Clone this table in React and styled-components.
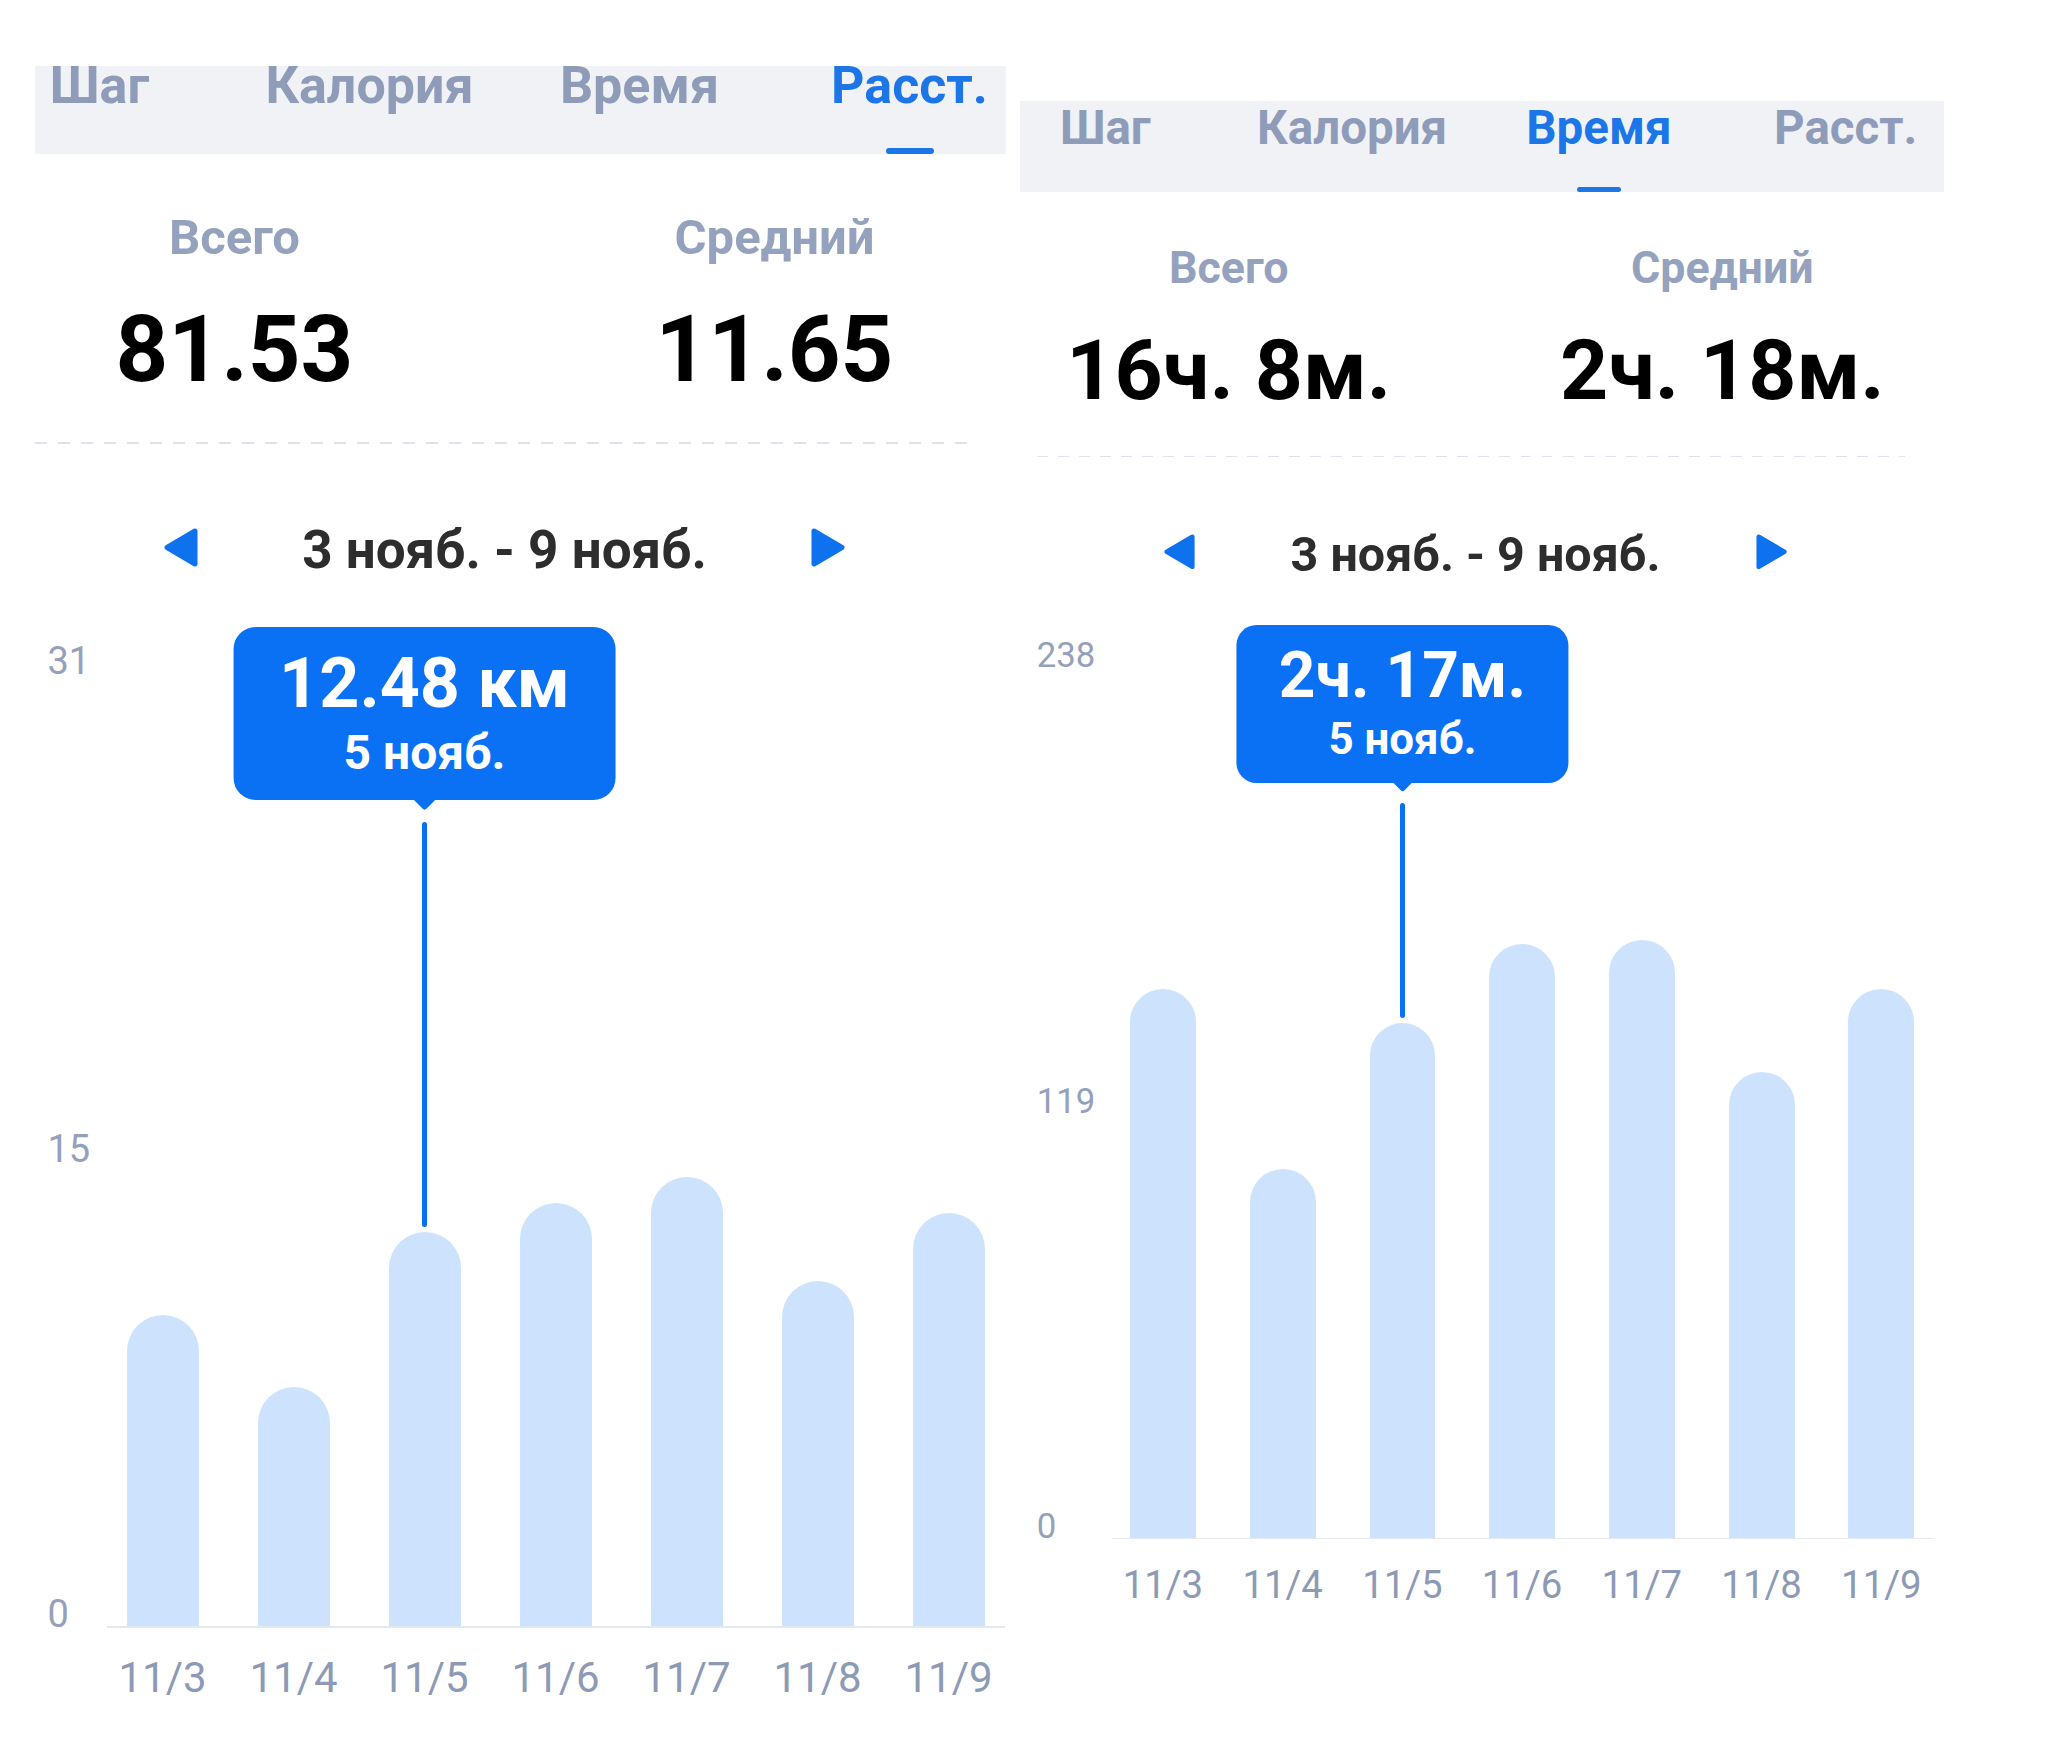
import React from 'react';
import styled, { createGlobalStyle } from 'styled-components';

const GlobalStyle = createGlobalStyle`
    html, body {
        margin: 0;
        padding: 0;
        background: #ffffff;
    }
    body {
        font-family: Roboto, "Noto Sans", "Liberation Sans", sans-serif;
    }
`;

const BLUE = '#0b71f4';
const TAB_BG = '#f0f2f6';
const PLOT_H = 979;

const Page = styled.div`
    display: flex;
    align-items: flex-start;
    width: 2048px;
    min-height: 1742px;
`;

// one phone screenshot, 1080 wide, scaled and placed where it sits in the collage
const Screen = styled.div`
    flex: none;
    width: 1080px;
    zoom: ${p => p.$scale};
    margin-left: ${p => p.$left}px;
    margin-top: ${p => p.$top}px;
`;

// $cut: the top of the bar was cropped away; $from/$to: visible part of its background
const TabBar = styled.div`
    display: grid;
    grid-template-columns: repeat(4, 1fr);
    height: ${p => 100 - p.$cut}px;
    background: linear-gradient(
        to right,
        transparent ${p => p.$from}px,
        ${TAB_BG} ${p => p.$from}px,
        ${TAB_BG} ${p => p.$to}px,
        transparent ${p => p.$to}px
    );
`;

const Tab = styled.div`
    display: flex;
    flex-direction: column;
    align-items: center;
    box-sizing: border-box;
    height: 100%;
    padding-top: ${p => (p.$cut ? 0 : 4)}px;
    font-size: 52px;
    font-weight: 700;
    line-height: ${p => (p.$cut ? 0.75 : 1)};
    color: ${p => (p.$active ? '#1c76e8' : '#8e9cba')};
`;

const Indicator = styled.span`
    margin-top: auto;
    width: 48px;
    height: 6px;
    border-radius: 3px;
    background: #1c76e8;
`;

const Stats = styled.div`
    display: grid;
    grid-template-columns: 1fr 1fr;
    padding-top: 59px;
    text-align: center;
`;

const StatLabel = styled.div`
    font-size: 49px;
    font-weight: 700;
    line-height: 1;
    color: #95a2bd;
`;

const StatValue = styled.div`
    margin-top: 42px;
    font-size: 92px;
    font-weight: 700;
    line-height: 1;
    color: #000000;
`;

const Divider = styled.div`
    margin: 46px 70px 0 ${p => p.$from}px;
    height: 2px;
    background: repeating-linear-gradient(to right, #dde3ee 0 12px, transparent 12px 23px);
`;

const DateRow = styled.div`
    display: flex;
    justify-content: center;
    align-items: center;
    gap: 104px;
    margin-top: 80px;
    font-size: 53px;
    font-weight: 700;
    line-height: 1;
    color: #2d2d2d;
`;

const ArrowIcon = styled.svg`
    display: block;
    margin-bottom: 7px;
`;

const Chart = styled.div`
    display: grid;
    grid-template-columns: 142px 898px;
    margin-top: 65px;
`;

const YAxis = styled.div`
    display: flex;
    flex-direction: column;
    justify-content: space-between;
    box-sizing: border-box;
    height: 991px;
    padding-left: ${p => p.$pad}px;
    font-size: 38px;
    font-weight: 400;
    line-height: 1;
    color: #95a1bb;

    & > span:nth-child(2) {
        margin-top: 23px;
    }
`;

const Plot = styled.div`
    position: relative;
    display: flex;
    justify-content: space-between;
    align-items: flex-end;
    height: ${PLOT_H}px;
    margin-top: 5px;
    padding: 0 20px;
    border-bottom: 2px solid #e3e8f1;
`;

const Bar = styled.div`
    width: 72px;
    background: #cde3fd;
    border-radius: 36px 36px 0 0;
`;

const XAxis = styled.div`
    grid-column: 2;
    display: flex;
    justify-content: space-between;
    padding: 0 6px;
    margin-top: 24px;
    font-size: 42px;
    font-weight: 400;
    line-height: 1;
    color: #8d9ab5;
`;

const XLabel = styled.span`
    width: 100px;
    text-align: center;
    white-space: nowrap;
`;

const Tooltip = styled.div`
    position: absolute;
    top: -20px;
    transform: translateX(-50%);
    box-sizing: border-box;
    height: 173px;
    padding: 21px 46px 0;
    border-radius: 22px;
    background: ${BLUE};
    color: #ffffff;
    text-align: center;
    white-space: nowrap;

    &::after {
        content: '';
        position: absolute;
        left: 50%;
        bottom: -7px;
        width: 18px;
        height: 18px;
        margin-left: -9px;
        border-radius: 3px;
        background: ${BLUE};
        transform: rotate(45deg);
    }
`;

const TipValue = styled.div`
    font-size: 70px;
    font-weight: 700;
    line-height: 1;
`;

const TipDate = styled.div`
    margin-top: 11px;
    font-size: 48px;
    font-weight: 700;
    line-height: 1;
`;

const Guide = styled.div`
    position: absolute;
    top: 175px;
    width: 5px;
    margin-left: -2.5px;
    border-radius: 3px;
    background: ${BLUE};
`;

const DAYS = ['11/3', '11/4', '11/5', '11/6', '11/7', '11/8', '11/9'];
const TABS = ['Шаг', 'Калория', 'Время', 'Расст.'];

const Arrow = ({ dir }) => (
    <ArrowIcon width="34" height="39" viewBox="0 0 34 39">
        <path
            d={dir === 'left' ? 'M31 3 L3 19.5 L31 36 Z' : 'M3 3 L31 19.5 L3 36 Z'}
            fill="#0e72ee"
            stroke="#0e72ee"
            strokeWidth="5"
            strokeLinejoin="round"
        />
    </ArrowIcon>
);

const Panel = ({ data }) => {
    const heights = data.values.map(v => (v / data.max) * PLOT_H);
    const sel = data.selected;
    // bar centre inside the plot: padding + slot * (bar + gap) + half bar
    const gap = (898 - 40 - 7 * 72) / 6;
    const selX = 20 + sel * (72 + gap) + 36;
    const guideH = PLOT_H - heights[sel] - 5 - 175;

    return (
        <Screen $scale={data.scale} $left={data.left} $top={data.top}>
            <TabBar $cut={data.cut} $from={data.barFrom} $to={data.barTo}>
                {TABS.map((t, i) => (
                    <Tab key={t} $active={i === data.activeTab} $cut={data.cut}>
                        {t}
                        {i === data.activeTab && <Indicator />}
                    </Tab>
                ))}
            </TabBar>
            <Stats>
                <div>
                    <StatLabel>Всего</StatLabel>
                    <StatValue>{data.total}</StatValue>
                </div>
                <div>
                    <StatLabel>Средний</StatLabel>
                    <StatValue>{data.average}</StatValue>
                </div>
            </Stats>
            <Divider $from={data.lineFrom} />
            <DateRow>
                <Arrow dir="left" />
                <span>3 нояб. - 9 нояб.</span>
                <Arrow dir="right" />
            </DateRow>
            <Chart>
                <YAxis $pad={data.labelPad}>
                    {data.ticks.map(t => (
                        <span key={t}>{t}</span>
                    ))}
                </YAxis>
                <Plot>
                    {heights.map((h, i) => (
                        <Bar key={DAYS[i]} style={{ height: h }} />
                    ))}
                    <Guide style={{ left: selX, height: guideH }} />
                    <Tooltip style={{ left: selX }}>
                        <TipValue>{data.tip}</TipValue>
                        <TipDate>5 нояб.</TipDate>
                    </Tooltip>
                </Plot>
                <XAxis>
                    {DAYS.map(d => (
                        <XLabel key={d}>{d}</XLabel>
                    ))}
                </XAxis>
            </Chart>
        </Screen>
    );
};

const distance = {
    scale: 1,
    left: -35.5,
    top: 66,
    cut: 12,
    barFrom: 70.5,
    barTo: 1041.5,
    lineFrom: 70.5,
    activeTab: 3,
    total: '81.53',
    average: '11.65',
    max: 31,
    ticks: ['31', '15', '0'],
    labelPad: 83,
    values: [9.84, 7.56, 12.48, 13.4, 14.23, 10.92, 13.08],
    selected: 2,
    tip: '12.48 км',
};

// lengths below are in the screen's own units (multiplied by the zoom)
const duration = {
    scale: 0.914,
    left: -68.4,
    top: 110.5,
    cut: 0,
    barFrom: 41.6,
    barTo: 1052.5,
    lineFrom: 60,
    activeTab: 2,
    total: '16ч. 8м.',
    average: '2ч. 18м.',
    max: 238,
    ticks: ['238', '119', '0'],
    labelPad: 60,
    values: [146, 98, 137, 158, 159, 124, 146],
    selected: 2,
    tip: '2ч. 17м.',
};

export default function App() {
    return (
        <>
            <GlobalStyle />
            <Page>
                <Panel data={distance} />
                <Panel data={duration} />
            </Page>
        </>
    );
}
